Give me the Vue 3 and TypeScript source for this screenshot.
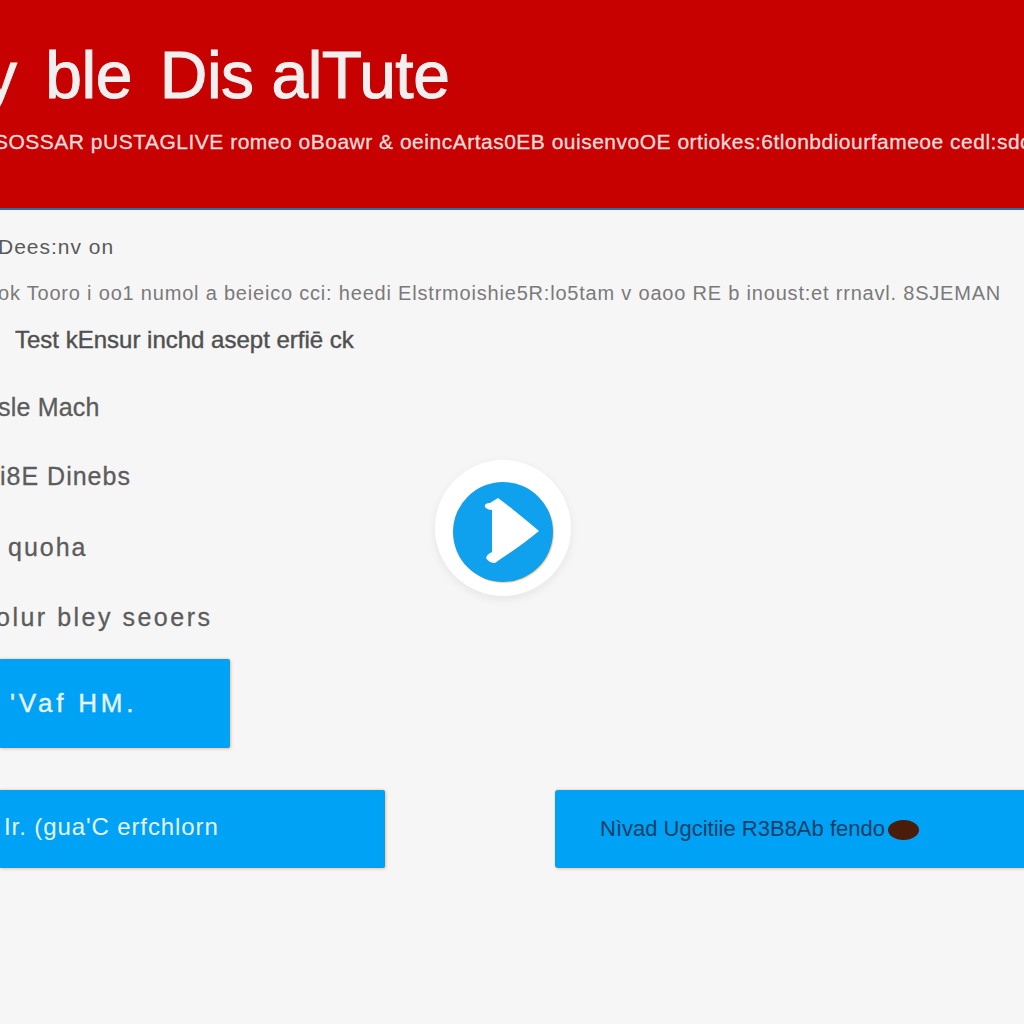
<script setup lang="ts">
const rows = [
  { text: "Dees:nv on", cls: "row-label" },
  { text: "ok  Tooro i oo1 numol a beieico cci: heedi Elstrmoishie5R:lo5tam v oaoo RE b inoust:et rrnavl. 8SJEMAN", cls: "row-desc" },
  { text: "Test kEnsur inchd asept erfiē ck", cls: "row-strong" },
  { text: "sle Mach", cls: "row-item" },
  { text: "i8E Dinebs", cls: "row-item" },
  { text: "quoha", cls: "row-item" },
  { text: "olur bley seoers", cls: "row-item" },
];
</script>

<template>
  <div class="page">
    <header class="banner">
      <h1 class="banner-title">y <span class="gap">ble</span> Dis alTute</h1>
      <p class="banner-sub">
        SOSSAR pUSTAGLIVE romeo oBoawr &amp; oeincArtas0EB ouisenvoOE ortiokes:6tlonbdiourfameoe cedl:sdc
      </p>
    </header>

    <main class="content">
      <p v-for="row in rows" :key="row.text" :class="['row', row.cls]">{{ row.text }}</p>

      <button class="btn btn-short">'Vaf HM.</button>

      <div class="btn-row">
        <button class="btn btn-wide">Ir. (gua'C erfchlorn</button>
        <button class="btn btn-dark">
          Nìvad Ugcitiie R3B8Ab fendo
          <span class="blob"></span>
        </button>
      </div>

      <div class="play-wrap">
        <div class="play-circle">
          <svg width="100" height="100" viewBox="0 0 100 100">
            <path
              d="M32 25 Q31 21 37 21 L45 16 Q60 27 86 49 Q70 62 58 70 Q50 75 42 81 Q36 81 33 76 Q34 72 39 70 L39 28 Q34 28 32 25 Z"
              fill="#fff"
            />
          </svg>
        </div>
      </div>
    </main>
  </div>
</template>

<style>
html,
body {
  margin: 0;
  background: #f6f6f6;
}
</style>

<style scoped>
.page {
  width: 1024px;
  height: 1024px;
  overflow: hidden;
  background: #f6f6f6;
  font-family: "Liberation Sans", Arial, sans-serif;
}

.banner {
  height: 210px;
  box-sizing: border-box;
  padding-top: 37px;
  background: #c70000;
  border-bottom: 2px solid #2b6fb0;
  overflow: hidden;
}

.banner-title {
  margin: 0 0 0 -16px;
  font-size: 66px;
  line-height: 76px;
  font-weight: 400;
  letter-spacing: -0.5px;
  white-space: nowrap;
  color: #f0f0f0;
  -webkit-text-stroke: 1px #f0f0f0;
}

.gap {
  margin-left: 11px;
  margin-right: 10px;
}

.banner-sub {
  margin: 15px 0 0 -6px;
  font-size: 21px;
  line-height: 28px;
  letter-spacing: 0.5px;
  white-space: nowrap;
  color: #f5dcdc;
  -webkit-text-stroke: 0.3px #f5dcdc;
}

.content {
  position: relative;
  display: flex;
  flex-direction: column;
  align-items: flex-start;
  padding-top: 24px;
}

.row {
  margin: 0;
  white-space: nowrap;
  font-size: 20px;
  line-height: 26px;
}

.row-label {
  margin-left: -2px;
  font-size: 21px;
  letter-spacing: 1px;
  color: #5a5a5a;
}

.row-desc {
  margin-top: 20px;
  margin-left: -2px;
  letter-spacing: 0.8px;
  color: #7a7a7a;
}

.row-strong {
  margin-top: 21px;
  margin-left: 15px;
  font-size: 24px;
  color: #505050;
  -webkit-text-stroke: 0.4px #505050;
}

.row-item {
  color: #5c5c5c;
  font-size: 25px;
  -webkit-text-stroke: 0.3px #5c5c5c;
}

.row-item:nth-of-type(4) {
  margin-top: 41px;
  margin-left: -2px;
  letter-spacing: 0.2px;
}

.row-item:nth-of-type(5) {
  margin-top: 43px;
  letter-spacing: 1px;
}

.row-item:nth-of-type(6) {
  margin-top: 45px;
  margin-left: 8px;
  letter-spacing: 2px;
}

.row-item:nth-of-type(7) {
  margin-top: 44px;
  margin-left: -4px;
  letter-spacing: 2.5px;
}

.btn {
  display: block;
  border: 0;
  padding: 0;
  font-family: inherit;
  font-size: 24px;
  text-align: left;
  color: #e6f4fd;
  background: #00a2f5;
  border-radius: 0 2px 2px 0;
  box-shadow: 1px 1px 3px rgba(240, 150, 90, 0.6), 0 -1px 2px rgba(240, 170, 110, 0.3);
}

.btn-short {
  width: 230px;
  height: 89px;
  margin-top: 29px;
  padding-left: 10px;
  font-size: 26px;
  letter-spacing: 3.8px;
  -webkit-text-stroke: 0.4px #e6f4fd;
}

.btn-row {
  display: grid;
  grid-template-columns: 385px 500px;
  column-gap: 170px;
  margin-top: 42px;
}

.btn-wide {
  height: 78px;
  padding-left: 4px;
  padding-bottom: 4px;
  letter-spacing: 0.9px;
}

.btn-dark {
  height: 78px;
  padding-left: 45px;
  color: #123f66;
  border-radius: 3px 0 0 3px;
  font-size: 22px;
}

.blob {
  display: inline-block;
  width: 31px;
  height: 20px;
  margin-left: -3px;
  border-radius: 50%;
  vertical-align: middle;
  background: #4a1c0a;
}

.play-wrap {
  position: absolute;
  left: 435px;
  top: 250px;
  width: 136px;
  height: 136px;
  border-radius: 50%;
  background: #fff;
  display: flex;
  align-items: center;
  justify-content: center;
  box-shadow: 0 3px 10px rgba(0, 0, 0, 0.07);
}

.play-circle {
  width: 100px;
  height: 100px;
  margin-top: 8px;
  border-radius: 50%;
  background: #0fa0ee;
  box-shadow: 1px 1px 1px rgba(240, 190, 110, 0.7);
}

.play-circle svg {
  display: block;
}
</style>
